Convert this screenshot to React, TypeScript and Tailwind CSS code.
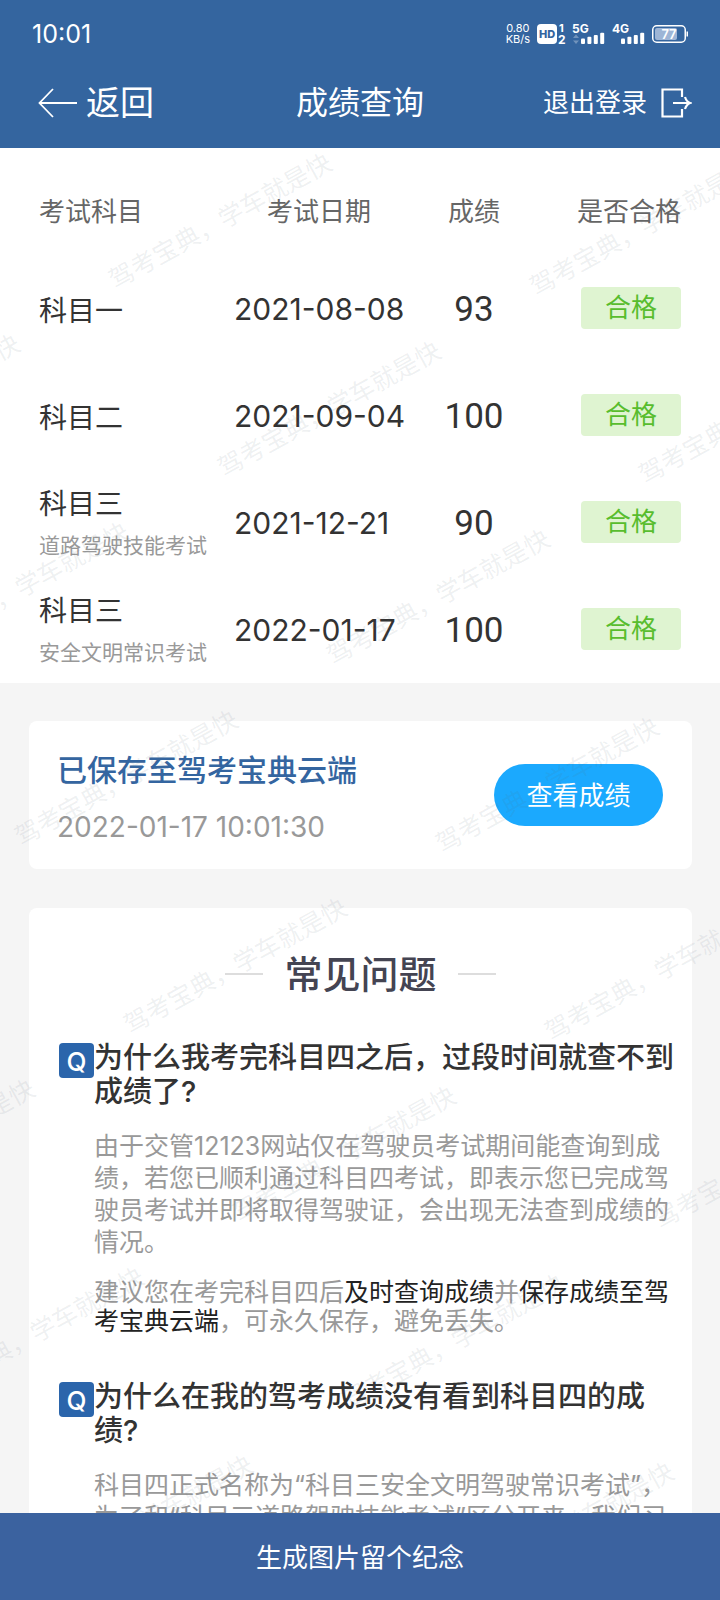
import React from 'react';

interface ExamResult {
  subject: string;
  detail?: string;
  date: string;
  score: number;
}

interface FaqItem {
  question: string;
  answers: React.ReactNode[];
}

const results: ExamResult[] = [
  { subject: '科目一', date: '2021-08-08', score: 93 },
  { subject: '科目二', date: '2021-09-04', score: 100 },
  { subject: '科目三', detail: '道路驾驶技能考试', date: '2021-12-21', score: 90 },
  { subject: '科目三', detail: '安全文明常识考试', date: '2022-01-17', score: 100 },
];

const faqs: FaqItem[] = [
  {
    question: '为什么我考完科目四之后，过段时间就查不到成绩了?',
    answers: [
      '由于交管12123网站仅在驾驶员考试期间能查询到成绩，若您已顺利通过科目四考试，即表示您已完成驾驶员考试并即将取得驾驶证，会出现无法查到成绩的情况。',
      <>
        建议您在考完科目四后<b className="font-normal text-[#222]">及时查询成绩</b>并
        <b className="font-normal text-[#222]">保存成绩至驾考宝典云端</b>，可永久保存，避免丢失。
      </>,
    ],
  },
  {
    question: '为什么在我的驾考成绩没有看到科目四的成绩?',
    answers: ['科目四正式名称为“科目三安全文明驾驶常识考试”，为了和“科目三道路驾驶技能考试”区分开来，我们习惯称为科目四。'],
  },
];

// Watermark lattice: every mark is shifted by a whole number of these two steps
const watermarks: { x: number; y: number }[] = [];
for (let row = 0; row < 8; row++) {
  for (let col = -3; col < 2; col++) {
    const x = 111 + col * 421 + row * 109;
    const y = 134 + col * 7 + row * 188;
    if (x > -240 && x < 720) watermarks.push({ x, y });
  }
}

const Signal = ({ label, data }: { label: string; data?: boolean }) => (
  <svg className="overflow-visible" width="33" height="22" viewBox="0 0 33 22" fill="white">
    <text x="0" y="10" fontSize="12" fontWeight="700">{label}</text>
    {data && (
      <g opacity="0.3">
        <path d="M1 15l3-3.5 3 3.5z" />
        <path d="M1 17.500l3 3.500 3-3.500z" />
      </g>
    )}
    <rect x="9" y="15.500" width="4" height="5.500" rx="1" />
    <rect x="15.400" y="13.700" width="4" height="7.300" rx="1" />
    <rect x="21.800" y="12" width="4" height="9" rx="1" />
    <rect x="28.200" y="9.700" width="4" height="11.300" rx="1" />
  </svg>
);

const StatusBar = () => (
  <div className="flex h-[58px] items-center justify-between pt-[10px] pr-8 pl-8">
    <span className="text-[25px] leading-none">10:01</span>
    <div className="flex items-center gap-[7px]">
      <div className="text-center text-[11px] leading-[11px]">
        0.80
        <br />
        KB/s
      </div>
      <svg className="overflow-visible" width="28" height="22" viewBox="0 0 28 22" fill="white">
        <rect x="0" y="1" width="20" height="20" rx="4" />
        <text x="2" y="15" fontSize="11" fontWeight="800" fill="#34659f">HD</text>
        <text x="22" y="9" fontSize="11" fontWeight="700">1</text>
        <text x="21" y="21" fontSize="12" fontWeight="700">2</text>
      </svg>
      <Signal label="5G" data />
      <Signal label="4G" />
      <svg width="36" height="20" viewBox="0 0 36 20">
        <rect x="0.750" y="1.750" width="32.500" height="16.500" rx="4" fill="none" stroke="white" strokeWidth="1.500" />
        <rect x="3" y="4" width="22" height="12" rx="2" fill="#9db5d6" />
        <rect x="34.500" y="7.500" width="1.500" height="5" fill="white" />
        <text x="17" y="14.500" fontSize="13" fontWeight="600" fill="white" textAnchor="middle">77</text>
      </svg>
    </div>
  </div>
);

const Header = () => (
  <header className="shrink-0 bg-[#34659f] text-white">
    <StatusBar />
    <nav className="grid h-[90px] grid-cols-[1fr_auto_1fr] items-center px-7">
      <button type="button" className="flex items-center gap-[9px] justify-self-start pl-[10px] text-[34px] leading-none">
        <svg width="39" height="30" viewBox="0 0 39 30" fill="none" stroke="white" strokeWidth="1.800">
          <path d="M15 1L1.500 15 15 29M1.500 15H39" />
        </svg>
        返回
      </button>
      <h1 className="text-[32px] leading-none">成绩查询</h1>
      <button type="button" className="flex items-center gap-[14px] justify-self-end text-[26px] leading-none">
        退出登录
        <svg width="31" height="30" viewBox="0 0 31 30" fill="none" stroke="white" strokeWidth="2.200">
          <path d="M21 9V1.500H1.500v27H21V21" />
          <path d="M12 15h17M24 9c1 3 2.500 5 5 6-2.500 1-4 3-5 6" />
        </svg>
      </button>
    </nav>
  </header>
);

const ResultTable = () => (
  <table className="w-full table-fixed bg-white text-[#333]">
    <colgroup>
      <col />
      <col className="w-[170px]" />
      <col className="w-[140px]" />
      <col className="w-[176px]" />
    </colgroup>
    <thead>
      <tr className="h-[107px] text-[26px] text-[#666]">
        <th className="pt-5 pl-[39px] text-left font-normal">考试科目</th>
        <th className="pt-5 font-normal">考试日期</th>
        <th className="pt-5 font-normal">成绩</th>
        <th className="pt-5 pr-[39px] text-right font-normal">是否合格</th>
      </tr>
    </thead>
    <tbody>
      {results.map((r) => (
        <tr key={r.date} className="h-[107px]">
          <td className="pt-1 pl-[39px]">
            <div className="text-[28px] leading-[42px]">{r.subject}</div>
            {r.detail && <div className="text-[21px] leading-[42px] text-[#999]">{r.detail}</div>}
          </td>
          <td className="pt-[2px] text-[30px] whitespace-nowrap">{r.date}</td>
          <td className="pt-1 text-center font-[Roboto] text-[35px]">{r.score}</td>
          <td className="pr-[39px] pb-[2px]">
            <div className="ml-auto h-[42px] w-[100px] rounded-sm bg-[#dff4d1] text-center text-[26px] leading-[42px] text-[#58bd2e]">
              合格
            </div>
          </td>
        </tr>
      ))}
    </tbody>
  </table>
);

const CloudCard = () => (
  <section className="mt-[38px] mr-7 ml-[29px] flex items-center justify-between rounded-lg bg-white pr-[29px] pl-7">
    <div className="flex flex-col gap-[15px] pt-7 pb-[21px]">
      <h2 className="text-[30px] leading-[42px] font-medium text-[#3465a0]">已保存至驾考宝典云端</h2>
      <time className="text-[28px] leading-[42px] text-[#999]">2022-01-17 10:01:30</time>
    </div>
    <button type="button" className="h-[62px] w-[169px] rounded-full bg-[#1ba9fe] text-[26px] text-white">
      查看成绩
    </button>
  </section>
);

const Faq = () => (
  <section className="mt-[39px] mr-7 ml-[29px] rounded-lg bg-white pt-[38px] pr-4 pb-10 pl-[30px]">
    <div className="mr-[14px] flex items-center justify-center gap-[21px]">
      <span className="h-[2px] w-[38px] bg-[#ddd]" />
      <h2 className="text-[38px] leading-[56px] font-medium text-[#444452]">常见问题</h2>
      <span className="h-[2px] w-[38px] bg-[#ddd]" />
    </div>
    <div className="mt-[39px] flex flex-col gap-11">
      {faqs.map((item) => (
        <article key={item.question} className="flex items-start">
          <span className="mt-[2px] h-[35px] w-[35px] shrink-0 rounded-sm bg-[#2b65ab] text-center text-[26px] leading-[38px] font-medium text-white">
            Q
          </span>
          <div className="flex-1">
            <h3 className="text-[29px] leading-[34px] font-medium text-[#333]">{item.question}</h3>
            {item.answers.map((answer, i) => (
              <p
                key={i}
                className={
                  i === 0
                    ? 'mt-[21px] text-[25px] leading-[32px] text-[#999]'
                    : 'mt-[20px] text-[25px] leading-[29px] text-[#999]'
                }
              >
                {answer}
              </p>
            ))}
          </div>
        </article>
      ))}
    </div>
  </section>
);

const Watermark = () => (
  <div aria-hidden="true" className="pointer-events-none absolute inset-0 overflow-hidden">
    {watermarks.map(({ x, y }) => (
      <span
        key={`${x},${y}`}
        className="absolute origin-left -translate-y-1/2 -rotate-29 text-[25px] leading-none whitespace-nowrap text-[#5a6a7d]/10"
        style={{ left: x, top: y }}
      >
        驾考宝典，学车就是快
      </span>
    ))}
  </div>
);

const App: React.FC = () => {
  return (
    <div className="flex h-screen flex-col bg-[#f5f5f5] font-[Inter,'Noto_Sans_CJK_SC',sans-serif]">
      <Header />
      <div className="relative min-h-0 flex-1">
        <main className="h-full overflow-y-auto [scrollbar-width:none]">
          <ResultTable />
          <CloudCard />
          <Faq />
        </main>
        <Watermark />
      </div>
      <button type="button" className="h-[87px] shrink-0 bg-[#3b629f] pt-[2px] text-[26px] text-white">
        生成图片留个纪念
      </button>
    </div>
  );
};

export default App;
